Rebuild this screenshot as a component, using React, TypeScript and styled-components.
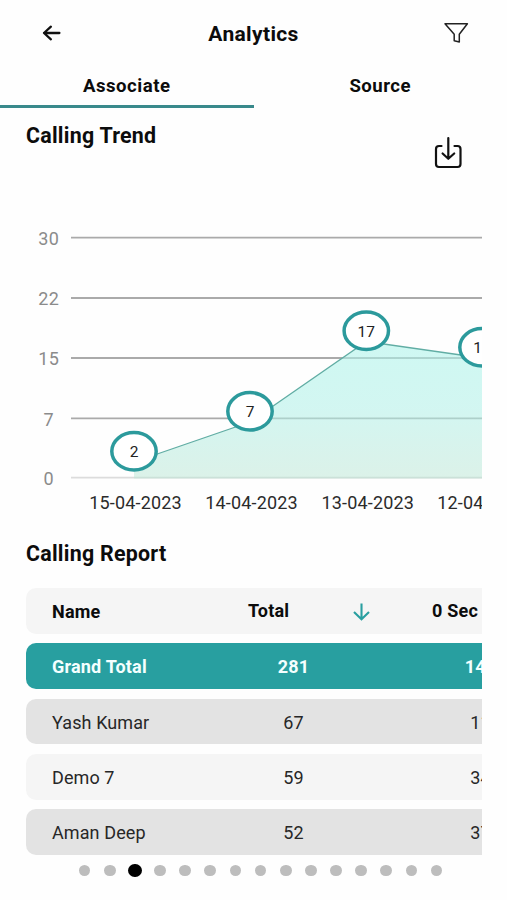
import React from "react";
import styled, { createGlobalStyle } from "styled-components";

const Global = createGlobalStyle`
  * { box-sizing: border-box; }
  body { margin: 0; background: #fefefe; font-family: Roboto, "Liberation Sans", sans-serif; color: #0c0c0c; }
`;

const Screen = styled.main`
  width: 507px;
  height: 900px;
  overflow: hidden;
  display: flex;
  flex-direction: column;
  background: #fefefe;
`;

const Header = styled.header`
  height: 66px;
  display: grid;
  grid-template-columns: 90px 1fr 90px;
  align-items: center;
`;

const BackButton = styled.div`
  padding-left: 40px;
  height: 24px;
`;

const FilterButton = styled.div`
  padding-left: 25px;
  height: 24px;
`;

const Title = styled.h1`
  margin: 0;
  padding-top: 1px;
  text-align: center;
  font-size: 21px;
  line-height: 24px;
  font-weight: 700;
  letter-spacing: 0.35px;
`;

const Tabs = styled.nav`
  display: flex;
  height: 42px;
  flex: none;
`;

const Tab = styled.div<{ $active?: boolean }>`
  width: 254px;
  text-align: center;
  font-size: 18.6px;
  line-height: 41px;
  font-weight: 700;
  letter-spacing: 0.5px;
  border-bottom: 3px solid ${(p) => (p.$active ? "#39898b" : "transparent")};
`;

const SectionHead = styled.section`
  height: 96px;
  flex: none;
  padding: 0 44px 0 26px;
  display: flex;
  justify-content: space-between;
`;

const SectionTitle = styled.h2<{ $top: number }>`
  margin: 0;
  padding-top: ${(p) => p.$top}px;
  font-size: 21.4px;
  line-height: 25px;
  font-weight: 700;
  letter-spacing: 0.25px;
`;

const DownloadButton = styled.div`
  padding-top: 26px;
`;

const ChartArea = styled.div`
  height: 316px;
  flex: none;
  padding-left: 26px;
`;

const Report = styled.section`
  height: 336px;
  flex: none;
  padding-left: 26px;
`;

const Table = styled.div`
  width: 456px;
  padding-top: 22px;
  display: flex;
  flex-direction: column;
  gap: 9.4px;
`;

const Row = styled.div<{ $tone: "head" | "total" | "dark" | "light" }>`
  height: 45.9px;
  padding-top: 2px;
  overflow: hidden;
  display: flex;
  align-items: center;
  white-space: nowrap;
  border-radius: 10px 0 0 10px;
  font-size: 18px;
  line-height: 24px;
  letter-spacing: ${(p) => (p.$tone === "head" || p.$tone === "total" ? 0.2 : 0.1)}px;
  font-weight: ${(p) => (p.$tone === "head" || p.$tone === "total" ? 700 : 400)};
  color: ${(p) => (p.$tone === "total" ? "#f4ffff" : p.$tone === "head" ? "#0c0c0c" : "#272727")};
  background: ${(p) => ({ head: "#f5f5f5", total: "#289fa0", dark: "#e3e3e3", light: "#f5f5f5" })[p.$tone]};
`;

const NameCell = styled.div`
  width: 174px;
  flex: none;
  padding-left: 26px;
`;

const ValueCell = styled.div`
  width: 187px;
  flex: none;
  text-align: center;
`;

const HeadCell = styled.div<{ $width: number; $inset: number }>`
  width: ${(p) => p.$width}px;
  flex: none;
  padding-left: ${(p) => p.$inset}px;
  padding-bottom: 2px;
`;

const SortIcon = styled.div`
  width: 28px;
  flex: none;
  height: 20px;
`;

const Dots = styled.div`
  display: flex;
  align-items: center;
  height: 14px;
  padding-left: 72px;
  margin-top: 7.5px;
`;

const DotSlot = styled.div`
  width: 25.15px;
  display: flex;
  justify-content: center;
`;

const Dot = styled.i<{ $active: boolean }>`
  width: ${(p) => (p.$active ? 13.4 : 11.8)}px;
  height: ${(p) => (p.$active ? 13 : 11.6)}px;
  border-radius: 50%;
  background: ${(p) => (p.$active ? "#000" : "#bdbdbd")};
`;

const grid = [
  { label: "30", y: 33.6 },
  { label: "22", y: 94 },
  { label: "15", y: 154 },
  { label: "7", y: 214.3 },
  { label: "0", y: 273.7 },
];

const points = [
  { x: 108, y: 258, value: "2", date: "15-04-2023" },
  { x: 224, y: 218, value: "7", date: "14-04-2023" },
  { x: 340.3, y: 137.5, value: "17", date: "13-04-2023" },
  { x: 456, y: 154, value: "15", date: "12-04-2023" },
];

const rows = [
  { name: "Grand Total", total: "281", zero: "144", tone: "total" },
  { name: "Yash Kumar", total: "67", zero: "11", tone: "dark" },
  { name: "Demo 7", total: "59", zero: "34", tone: "light" },
  { name: "Aman Deep", total: "52", zero: "37", tone: "dark" },
] as const;

function TrendChart() {
  const line = points.map((p) => `${p.x},${p.y}`).join(" ");
  return (
    <svg width="456" height="316" viewBox="0 0 456 316" display="block" fontFamily="Roboto, sans-serif">
      <defs>
        <linearGradient id="area" x1="0" y1="0" x2="0" y2="1">
          <stop offset="0" stopColor="#aff4eb" stopOpacity="0.6" />
          <stop offset="0.5" stopColor="#aff0e7" stopOpacity="0.55" />
          <stop offset="1" stopColor="#bce6d5" stopOpacity="0.52" />
        </linearGradient>
      </defs>
      {grid.map((g) => (
        <g key={g.label}>
          <text x="22.5" y={g.y + 7.4} textAnchor="middle" fontSize="18" fill="#8b8b8b" textLength={g.label.length > 1 ? 20.5 : undefined}>
            {g.label}
          </text>
          <line x1="45" x2="456" y1={g.y} y2={g.y} stroke={g.label === "0" ? "#dcdcdc" : "#aaaaaa"} strokeWidth="1.8" />
        </g>
      ))}
      <polygon points={`108,274.5 ${line} 456,274.5`} fill="url(#area)" />
      <polyline points={line} fill="none" stroke="#61ada4" strokeWidth="1.3" />
      {points.map((p) => (
        <g key={p.date}>
          <ellipse cx={p.x} cy={p.y - 10.7} rx="22.2" ry="18.7" fill="#fff" stroke="#2c9a9c" strokeWidth="3.5" />
          <text x={p.x} y={p.y - 4.8} textAnchor="middle" fontSize="15.5" fill="#222">
            {p.value}
          </text>
          <text x={p.x + 1.4} y="304.7" textAnchor="middle" fontSize="18" fill="#2b2b2b" textLength="92.5">
            {p.date}
          </text>
        </g>
      ))}
    </svg>
  );
}

export default function App() {
  return (
    <>
      <Global />
      <Screen>
        <Header>
          <BackButton>
            <svg width="24" height="24" fill="none" stroke="#111" strokeWidth="2.3" strokeLinecap="round" strokeLinejoin="round">
              <path d="M19.4 12H4M10.9 5.7L4 12l6.9 6.3" />
            </svg>
          </BackButton>
          <Title>Analytics</Title>
          <FilterButton>
            <svg width="28" height="24" fill="none" stroke="#222" strokeWidth="1.5" strokeLinejoin="round">
              <path d="M3 2.7H25.4L17.3 13.3V20.9L12.2 19.7V13.3Z" />
            </svg>
          </FilterButton>
        </Header>
        <Tabs>
          <Tab $active>Associate</Tab>
          <Tab>Source</Tab>
        </Tabs>
        <SectionHead>
          <SectionTitle $top={15}>Calling Trend</SectionTitle>
          <DownloadButton>
            <svg width="30" height="36" fill="none" stroke="#111" strokeWidth="2.2" strokeLinecap="round" strokeLinejoin="round">
              <path d="M8.5 12H6a3 3 0 0 0-3 3v15a3 3 0 0 0 3 3h18.500a3 3 0 0 0 3-3V15a3 3 0 0 0-3-3H21.500M15.300 4V24.500M9.600 19.500L15.300 24.800l5.900-5.300" />
            </svg>
          </DownloadButton>
        </SectionHead>
        <ChartArea>
          <TrendChart />
        </ChartArea>
        <Report>
          <SectionTitle $top={21}>Calling Report</SectionTitle>
          <Table>
            <Row $tone="head">
              <NameCell>Name</NameCell>
              <HeadCell $width={152} $inset={48}>Total</HeadCell>
              <SortIcon>
                <svg width="20" height="20" fill="none" stroke="#299fa0" strokeWidth="2.1">
                  <path d="M9.500 1.500V17M2 10l7.500 7.300L17 10" />
                </svg>
              </SortIcon>
              <HeadCell $width={102} $inset={52}>0 Sec</HeadCell>
            </Row>
            {rows.map((r) => (
              <Row key={r.name} $tone={r.tone}>
                <NameCell>{r.name}</NameCell>
                <ValueCell>{r.total}</ValueCell>
                <ValueCell>{r.zero}</ValueCell>
              </Row>
            ))}
          </Table>
        </Report>
        <Dots>
          {Array.from({ length: 15 }, (_, i) => (
            <DotSlot key={i}>
              <Dot $active={i === 2} />
            </DotSlot>
          ))}
        </Dots>
      </Screen>
    </>
  );
}
